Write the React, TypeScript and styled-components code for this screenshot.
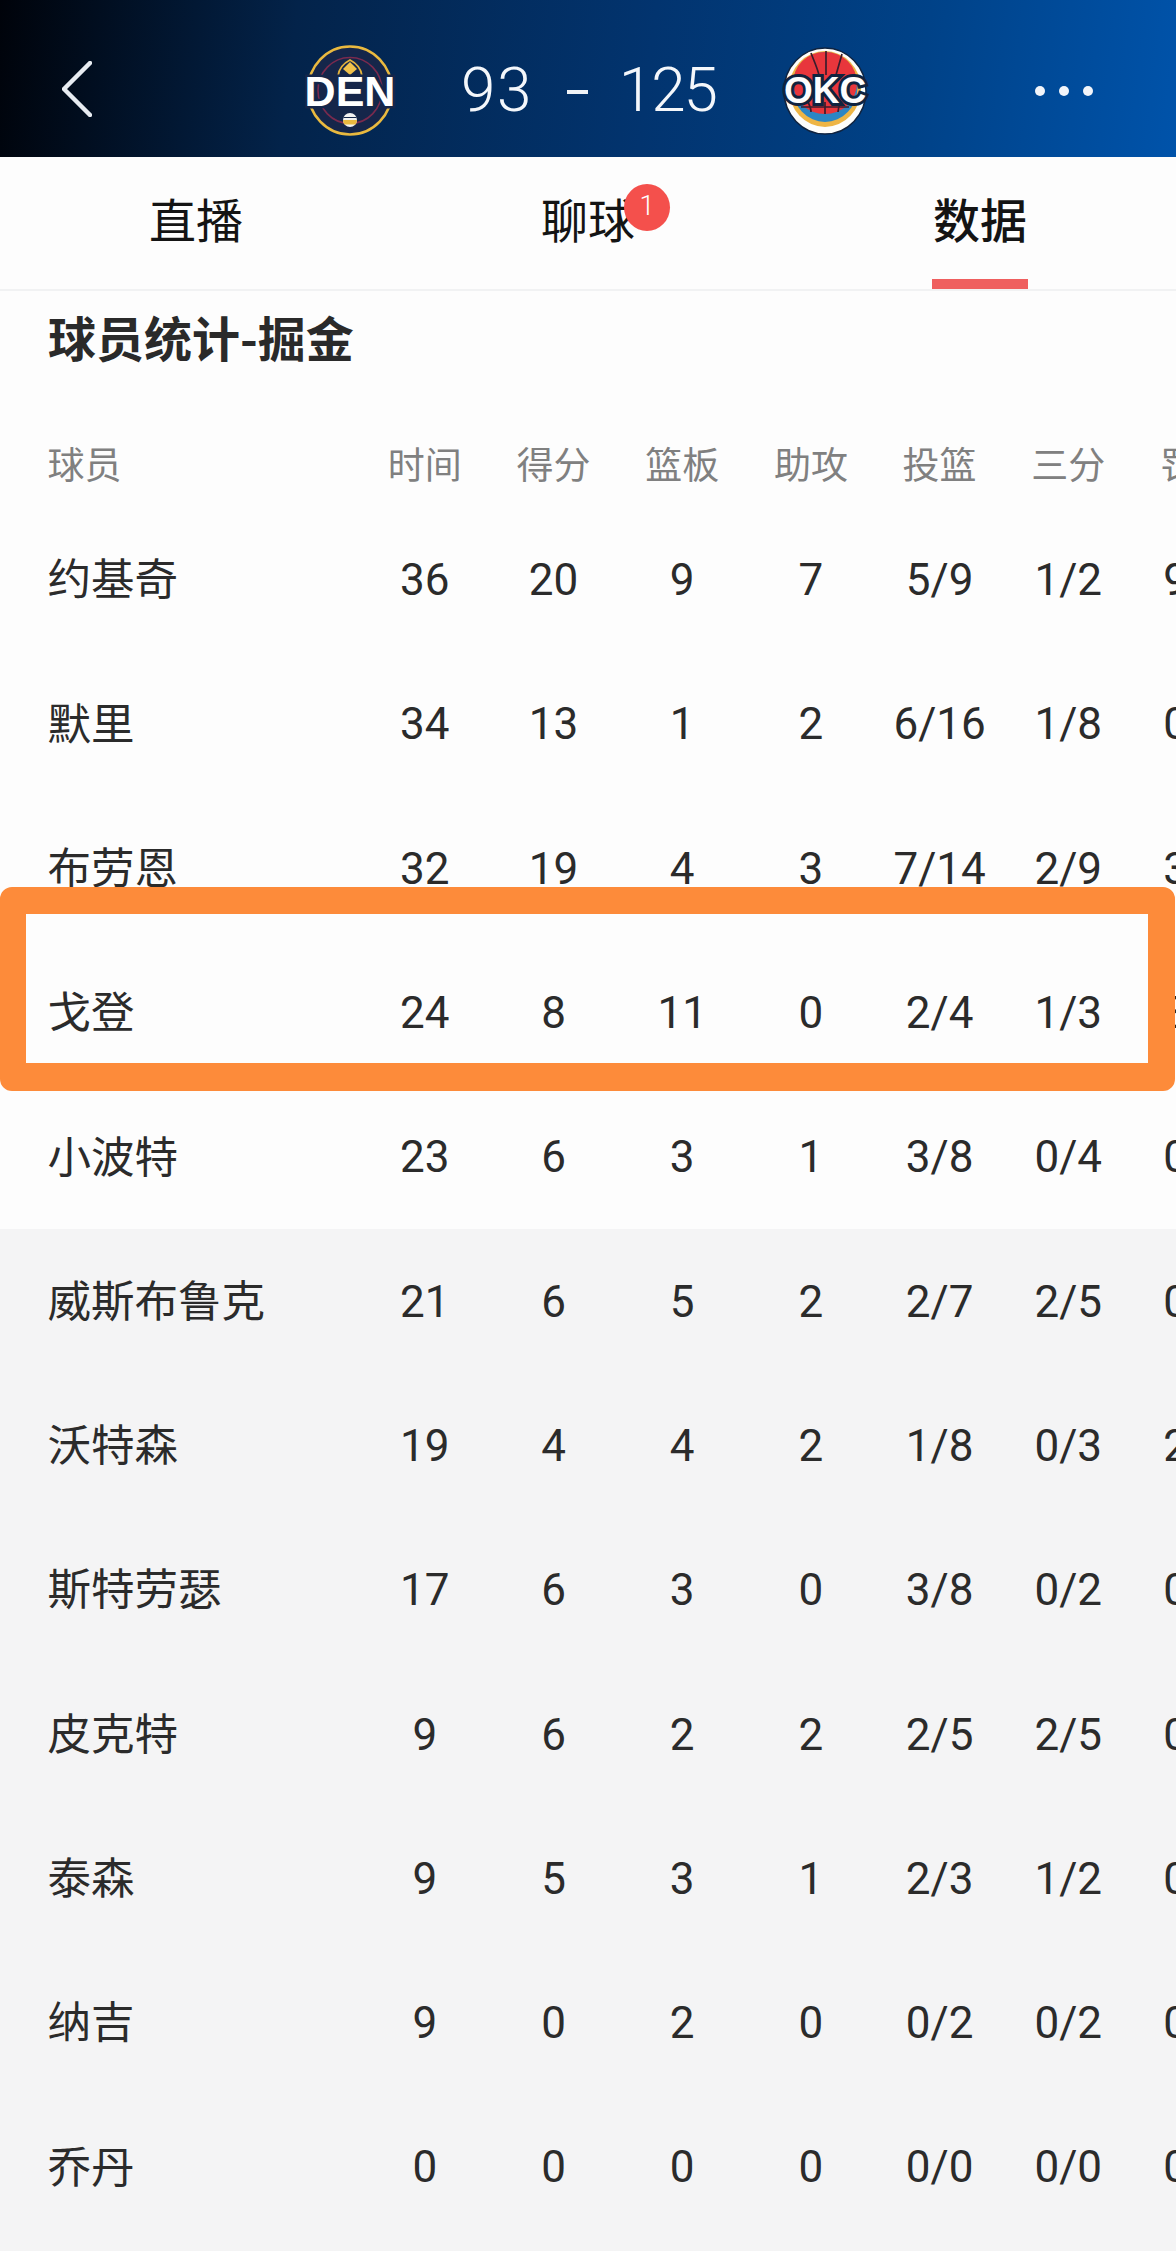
import React from "react";
import styled, { createGlobalStyle } from "styled-components";

const GlobalStyle = createGlobalStyle`
  html, body { margin: 0; padding: 0; background: #fdfdfd; }
  body { font-family: Roboto, "Noto Sans CJK SC", sans-serif; }
`;

const CJK = `"Noto Sans CJK SC", sans-serif`;
const ROW = 144.3;

const Page = styled.div`
  position: relative;
  width: 1176px;
  height: 2251px;
  overflow: hidden;
  background: #fdfdfd;
`;

const Header = styled.header`
  display: flex;
  align-items: center;
  height: 157px;
  padding: 25px 0 0 62px;
  box-sizing: border-box;
  background: linear-gradient(97deg, #00030a 0%, #03234a 25%, #02346f 55%, #004288 78%, #0053aa 100%);
  color: #f4f7fb;
`;

const BackIcon = styled.svg`
  width: 30px;
  height: 56px;
  flex: none;
  margin: -4px 2px 0 0;
`;

const Matchup = styled.div`
  display: flex;
  align-items: center;
  margin-left: 209px;
`;

const TeamLogo = styled.svg`
  width: 94px;
  height: 94px;
  flex: none;
  display: block;
`;

const Score = styled.div`
  display: flex;
  align-items: center;
  width: 382px;
  margin-top: -3px;
  padding-left: 64px;
  box-sizing: border-box;
  font: 300 62px/1 Roboto, sans-serif;
`;

const ScoreValue = styled.span<{ $tracking: number }>`
  letter-spacing: ${(p) => p.$tracking}px;
`;

const ScoreDash = styled.span`
  width: 21px;
  height: 4px;
  margin: 4px 31px 0 34px;
  background: #f0f3f7;
`;

const MoreDots = styled.div`
  display: flex;
  gap: 14px;
  margin-left: 162px;
`;

const Dot = styled.span`
  width: 10px;
  height: 10px;
  border-radius: 50%;
  background: #f2f5fa;
`;

const TabBar = styled.nav`
  display: grid;
  grid-template-columns: repeat(3, 1fr);
  height: 134px;
  box-sizing: border-box;
  border-bottom: 2px solid #f1f2f3;
`;

const Tab = styled.div<{ $active?: boolean }>`
  position: relative;
  display: flex;
  align-items: center;
  justify-content: center;
  padding-bottom: 11px;
  font: ${(p) => (p.$active ? 500 : 400)} 47px/1 ${CJK};
  color: #141414;
`;

const TabLabel = styled.span`
  position: relative;
`;

const Indicator = styled.span`
  position: absolute;
  left: 50%;
  bottom: 0;
  width: 96px;
  height: 10px;
  margin-left: -48px;
  background: #ef5f5f;
`;

const Badge = styled.span`
  position: absolute;
  left: 83px;
  top: -10px;
  width: 46px;
  height: 47px;
  border-radius: 50%;
  background: #f4504c;
  color: #fff;
  font: 300 27px/45px Roboto, sans-serif;
  text-align: center;
`;

const Title = styled.h2`
  margin: 0;
  height: 96px;
  padding: 15px 0 0 48px;
  box-sizing: border-box;
  font: 700 48px/60px ${CJK};
  color: #2a2a2a;
`;

const Grid = styled.div`
  display: grid;
  grid-template-columns: 360.5px repeat(7, 128.7px);
  align-items: center;
`;

const HeadRow = styled(Grid)`
  height: 118px;
  padding-top: 35px;
  box-sizing: border-box;
  font: 400 37px/1 ${CJK};
  color: #808080;
`;

const HeadName = styled.div`
  padding-left: 47.500px;
`;

const HeadCell = styled.div`
  text-align: center;
  white-space: nowrap;
`;

const Row = styled(Grid)`
  height: ${ROW}px;
  color: #2b2b2b;
`;

const Name = styled.div`
  padding-left: 47.500px;
  font: 400 43.500px/1 ${CJK};
`;

const Stat = styled.div`
  padding-top: 6px;
  text-align: center;
  font: 400 44px/1 Roboto, sans-serif;
  white-space: nowrap;
`;

const Starters = styled.section`
  position: relative;
  z-index: 1;
  background: #fdfdfd;
  box-shadow: 0 3px 0 #fdfdfd;
`;

const Bench = styled.section`
  background: #f4f4f5;
  min-height: 1100px;
`;

const Highlight = styled.div`
  position: absolute;
  z-index: 2;
  left: 0;
  top: 887px;
  width: 1175px;
  height: 204px;
  box-sizing: border-box;
  border: solid #fd8b3a;
  border-width: 27px 27px 28px 26px;
  border-radius: 12px;
`;

const columns = ["时间", "得分", "篮板", "助攻", "投篮", "三分", "罚球"];

type Player = [string, string, string, string, string, string, string, string];

const starters: Player[] = [
  ["约基奇", "36", "20", "9", "7", "5/9", "1/2", "9/9"],
  ["默里", "34", "13", "1", "2", "6/16", "1/8", "0/0"],
  ["布劳恩", "32", "19", "4", "3", "7/14", "2/9", "3/4"],
  ["戈登", "24", "8", "11", "0", "2/4", "1/3", "3/4"],
  ["小波特", "23", "6", "3", "1", "3/8", "0/4", "0/0"],
];

const bench: Player[] = [
  ["威斯布鲁克", "21", "6", "5", "2", "2/7", "2/5", "0/0"],
  ["沃特森", "19", "4", "4", "2", "1/8", "0/3", "2/2"],
  ["斯特劳瑟", "17", "6", "3", "0", "3/8", "0/2", "0/0"],
  ["皮克特", "9", "6", "2", "2", "2/5", "2/5", "0/0"],
  ["泰森", "9", "5", "3", "1", "2/3", "1/2", "0/0"],
  ["纳吉", "9", "0", "2", "0", "0/2", "0/2", "0/0"],
  ["乔丹", "0", "0", "0", "0", "0/0", "0/0", "0/0"],
];

const PlayerRow = ({ player }: { player: Player }) => {
  const [name, ...stats] = player;
  return (
    <Row>
      <Name>{name}</Name>
      {stats.map((s, i) => (
        <Stat key={i}>{s}</Stat>
      ))}
    </Row>
  );
};

const DenLogo = () => (
  <TeamLogo viewBox="0 0 94 94">
    <ellipse cx="47" cy="46.500" rx="42" ry="44" fill="#15264a" stroke="#e9b93f" strokeWidth="2.600" />
    <ellipse cx="47" cy="46.500" rx="32" ry="33" fill="none" stroke="#7a2a4e" strokeWidth="1.600" />
    <path d="M35 32c1-8 6-13 12-16 6 3 11 8 12 16" fill="#15264a" stroke="#e3b23c" strokeWidth="1.800" />
    <path d="M47 18l7 7-7 6-7-6z" fill="#f0c14b" />
    <circle cx="47" cy="76" r="7" fill="#f2f2f2" />
    <path d="M40 76h14a7 7 0 0 1-1.500 4.500h-11A7 7 0 0 1 40 76z" fill="#e9b93f" />
    <path d="M40.500 73.500h13" stroke="#15264a" strokeWidth="1" />
    <text
      x="47"
      y="62"
      textAnchor="middle"
      fontFamily="Liberation Sans, sans-serif"
      fontWeight="700"
      fontSize="43"
      fill="#fff"
      stroke="#15264a"
      strokeWidth="5"
      paintOrder="stroke"
    >
      DEN
    </text>
  </TeamLogo>
);

const OkcLogo = () => (
  <TeamLogo viewBox="0 0 94 94">
    <ellipse cx="46" cy="47" rx="41" ry="43" fill="#fdfdfb" stroke="#10233f" strokeWidth="1.500" />
    <ellipse cx="46" cy="45" rx="36" ry="38" fill="#eeb544" />
    <ellipse cx="46" cy="43" rx="32.500" ry="35" fill="#2c86c4" />
    <ellipse cx="46" cy="39" rx="32" ry="31" fill="#e8363c" />
    <path d="M32 9c3 8 6 14 8 22M47 7v24M63 10c-2 7-4 14-6 21M29 58c2 4 3 7 3 10M46 58v12M62 58c-2 3-3 6-3 10M22 63h48" stroke="#3a1d2d" strokeWidth="1.700" fill="none" />
    <text
      x="46"
      y="59"
      textAnchor="middle"
      fontFamily="Liberation Sans, sans-serif"
      fontWeight="700"
      fontSize="37"
      fill="#fdfdfd"
      stroke="#10233f"
      strokeWidth="6"
      paintOrder="stroke"
    >
      OKC
    </text>
  </TeamLogo>
);

export default function App() {
  return (
    <Page>
      <GlobalStyle />
      <Header>
        <BackIcon viewBox="0 0 30 56">
          <path d="M28 2 L2 28 L28 54" fill="none" stroke="#e8ecf1" strokeWidth="4.500" strokeLinecap="round" strokeLinejoin="round" />
        </BackIcon>
        <Matchup>
          <DenLogo />
          <Score>
            <ScoreValue $tracking={1.5}>93</ScoreValue>
            <ScoreDash />
            <ScoreValue $tracking={-2}>125</ScoreValue>
          </Score>
          <OkcLogo />
        </Matchup>
        <MoreDots>
          <Dot />
          <Dot />
          <Dot />
        </MoreDots>
      </Header>
      <TabBar>
        <Tab>直播</Tab>
        <Tab>
          <TabLabel>
            聊球
            <Badge>1</Badge>
          </TabLabel>
        </Tab>
        <Tab $active>
          数据
          <Indicator />
        </Tab>
      </TabBar>
      <Title>球员统计-掘金</Title>
      <HeadRow>
        <HeadName>球员</HeadName>
        {columns.map((c) => (
          <HeadCell key={c}>{c}</HeadCell>
        ))}
      </HeadRow>
      <Starters>
        {starters.map((p) => (
          <PlayerRow key={p[0]} player={p} />
        ))}
      </Starters>
      <Bench>
        {bench.map((p) => (
          <PlayerRow key={p[0]} player={p} />
        ))}
      </Bench>
      <Highlight />
    </Page>
  );
}
